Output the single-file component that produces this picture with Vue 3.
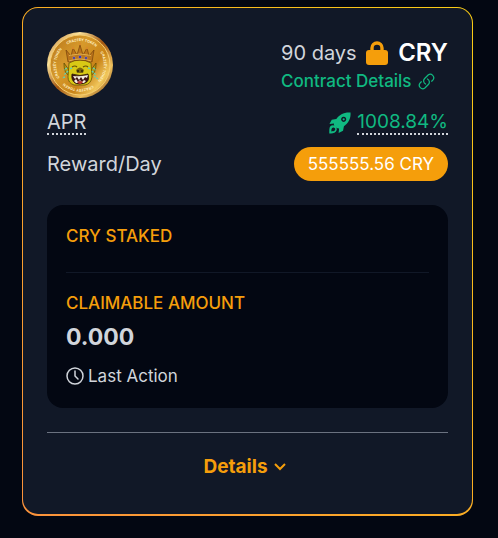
<template>
  <main class="page">
    <section class="pool-card">
      <div class="pool-body">
        <header class="pool-header">
          <svg class="coin" viewBox="0 0 66 66" role="img" aria-label="CRY token">
            <defs>
              <linearGradient id="coinRim" x1="0" y1="0" x2="1" y2="1">
                <stop offset="0" stop-color="#b96b1c" />
                <stop offset="0.25" stop-color="#fbe29b" />
                <stop offset="0.5" stop-color="#a3560f" />
                <stop offset="0.75" stop-color="#edbf5c" />
                <stop offset="1" stop-color="#713407" />
              </linearGradient>
              <linearGradient id="coinFace" x1="0" y1="0.1" x2="1" y2="0.9">
                <stop offset="0" stop-color="#b9781b" />
                <stop offset="0.35" stop-color="#d79a2c" />
                <stop offset="0.65" stop-color="#c98419" />
                <stop offset="0.85" stop-color="#f1c75c" />
                <stop offset="1" stop-color="#b66d13" />
              </linearGradient>
              <path id="coinRing" d="M33 9a24 24 0 1 1-.01 0" />
            </defs>
            <circle cx="33" cy="33" r="33" fill="url(#coinRim)" />
            <circle cx="33" cy="33" r="30" fill="url(#coinFace)" stroke="#f6ce70" />
            <g v-for="angle in ringAngles" :key="angle" :transform="`rotate(${angle} 33 33)`">
              <text class="coin-text">
                <textPath href="#coinRing">CRAZEEY TOKEN</textPath>
              </text>
            </g>
            <!-- ears -->
            <path d="M22 38l-5-7c0 6 1 11 5 12zM44 38l5-7c0 6-1 11-5 12z" fill="#b89911" stroke="#594306" stroke-width="0.7" />
            <!-- head -->
            <path d="M22 31q11-6 22 0l1 14q-1 7-7 8H27q-6-2-6-8z" fill="#d9c915" stroke="#66500a" stroke-width="0.8" />
            <path d="M25 35q3-2 5 0M36 35q3-2 5 0" fill="none" stroke="#68530a" stroke-width="1.2" />
            <path d="M29 38q4-5 8 0l-1 3h-6z" fill="#7b650c" />
            <circle cx="31" cy="39" r="1" fill="#282308" />
            <circle cx="35" cy="39" r="1" fill="#282308" />
            <!-- grin -->
            <path d="M25 42q8 3 16 0 2 7-3 9-6 2-10 0-4-3-3-9z" fill="#401515" stroke="#26120a" stroke-width="0.8" />
            <path d="M26 44l2 3 2-2 2 3 2-3 2 3 2-3 2 1 1-3q-8 2-15 1zM27 49l2-2 2 3 2-2 2 2 2-2 2 1-2 2h-8z" fill="#f5eee0" />
            <path d="M30 50q3-2 6 0l-2 2h-2z" fill="#b93630" />
            <!-- crown -->
            <path d="M21 30l-2-12 5 6 2-8 4 7 3-10 3 10 4-7 2 8 5-6-2 12q-12-4-24 0z" fill="#bc761b" stroke="#76400b" stroke-width="0.7" />
            <path d="M22 23.500q11-3 22 0M22 29q11-4 22 0" fill="none" stroke="#f0c15b" stroke-width="0.8" />
            <circle v-for="x in crownTips" :key="x" :cx="x" :cy="x === 33 ? 12 : 16" r="1.2" fill="#d98b2b" />
            <g fill="#3338bd" stroke="#e3a33b" stroke-width="0.5">
              <circle cx="27" cy="26" r="1.5" />
              <circle cx="33" cy="25" r="1.7" />
              <circle cx="39" cy="26" r="1.5" />
            </g>
            <!-- tears -->
            <path d="M20 36l-3 2M21 39l-4 4M18 45l-3 1M46 36l3 2M45 39l4 4M47 44l4 3M25 36l-2 1M41 36l3 1" stroke="#65cfb0" stroke-width="1.4" stroke-dasharray="2 1" />
          </svg>

          <div class="pool-summary">
            <div class="pool-title">
              <span class="duration">90 days</span>
              <svg class="lock-icon" viewBox="0 0 22 24" aria-hidden="true">
                <path d="M6 11V7a5 5 0 0 1 10 0v4" fill="none" stroke="currentColor" stroke-width="3.4" />
                <rect y="9" width="22" height="15" rx="3" fill="currentColor" />
              </svg>
              <h2 class="symbol">CRY</h2>
            </div>
            <a class="contract-link" href="#contract">
              Contract Details
              <svg class="link-icon" viewBox="1 1 22 22" aria-hidden="true">
                <path d="M13.2 8.7a4.5 4.5 0 0 1 1.2 7.2l-4.5 4.5a4.5 4.5 0 0 1-6.3-6.3l1.7-1.7m13.4-.8 1.7-1.7a4.5 4.5 0 0 0-6.3-6.3L9.6 8.1a4.5 4.5 0 0 0 1.2 7.2" />
              </svg>
            </a>
          </div>
        </header>

        <div class="stat-row">
          <span class="dotted">APR</span>
          <span class="apr-value">
            <svg class="rocket-icon" viewBox="0 0 24 24" aria-hidden="true">
              <path fill-rule="evenodd" d="M23.5.5C16 0 11.5 3 8 7.5L3 8.5.5 13l5-.5c-.7 2 .8 4.8 5.5 5.5l-.5 5 4.8-2.500 1-5C21 12 24 7.500 23.500.500zM16 5.200a2.800 2.800 0 1 0 .01 0z" />
              <circle cx="16" cy="8" r="1.2" />
              <path fill-rule="evenodd" d="M1.5 15.5c1.500-1.500 4-1.500 5.700.3 1.800 1.800 1.700 4.200.1 5.800C5.700 23.200 2.800 23.500.300 23.500c0-2.800-.2-6.500 1.200-8zm1.900 2c-.8.8-.8 2.500-.8 3.700 1.300 0 2.900-.1 3.600-.9.8-.9.8-2 0-2.800s-1.900-.8-2.800 0z" />
            </svg>
            <span class="dotted">1008.84%</span>
          </span>
        </div>
        <div class="stat-row">
          <span>Reward/Day</span>
          <span class="reward-pill">555555.56 CRY</span>
        </div>

        <div class="stake-panel">
          <h3 class="panel-label">CRY STAKED</h3>
          <hr class="panel-divider" />
          <h3 class="panel-label">CLAIMABLE AMOUNT</h3>
          <p class="claimable">0.000</p>
          <p class="last-action">
            <svg class="clock-icon" viewBox="0 0 18 18" aria-hidden="true">
              <circle cx="9" cy="9" r="8" />
              <path d="M9 4v5l3 3" />
            </svg>
            Last Action
          </p>
        </div>

        <footer class="pool-footer">
          <button class="details-button" type="button" :aria-expanded="expanded" @click="expanded = !expanded">
            Details
            <svg class="chevron-icon" :class="{ open: expanded }" viewBox="0 0 12 8" aria-hidden="true">
              <path d="M1 1l5 5 5-5" />
            </svg>
          </button>
        </footer>
      </div>
    </section>
  </main>
</template>

<script setup>
import { ref } from 'vue'

const expanded = ref(false)

// Start angles of the four legends around the coin
const ringAngles = [-32, 58, 148, 238]

const crownTips = [26, 33, 40]
</script>

<style>
body {
  background: #030712;
}
</style>

<style scoped>
.page {
  padding: 7px 25px 22px 22px;
  color: #d1d5db;
  font-family: Inter, 'Liberation Sans', sans-serif;
  font-size: 20px;
  line-height: 24px;
}

/* Gradient frame around the card */
.pool-card {
  padding: 1px 1px 2px;
  border-radius: 16px;
  background: linear-gradient(to top right, #fb923c, #fbad23, #facc15);
}

.pool-body {
  padding: 24px;
  border-radius: 15px;
  background: #111827;
}

.pool-header {
  display: flex;
  align-items: center;
  justify-content: space-between;
  margin-bottom: 13px;
}

.coin {
  width: 66px;
  height: 66px;
}

.coin-text {
  fill: #fff0c2;
  font-size: 3.6px;
  font-weight: 700;
}

.pool-summary {
  width: 167px;
}

.pool-title {
  display: flex;
  align-items: center;
  justify-content: space-between;
  height: 32px;
}

.lock-icon {
  width: 22px;
  height: 24px;
  color: #f59e0b;
}

.symbol {
  margin: 0;
  color: #fff;
  font-size: 24px;
  font-weight: 600;
}

.contract-link {
  display: flex;
  align-items: center;
  gap: 6px;
  color: #10b981;
  font-size: 17px;
  font-weight: 500;
  white-space: nowrap;
  text-decoration: none;
}

.link-icon {
  width: 17px;
  height: 17px;
  fill: none;
  stroke: currentColor;
  stroke-width: 1.6;
  stroke-linecap: round;
}

.stat-row {
  display: flex;
  align-items: center;
  justify-content: space-between;
  margin-bottom: 12px;
}

.dotted {
  line-height: 22px;
  border-bottom: 2px dotted #d1d5db;
}

.apr-value {
  display: flex;
  align-items: center;
  gap: 6px;
  color: #10b981;
  font-size: 19px;
}

.rocket-icon {
  width: 22px;
  height: 22px;
  fill: currentColor;
}

.reward-pill {
  padding: 5px 14px;
  border-radius: 17px;
  background: #f59e0b;
  color: #fff;
  font-size: 17px;
}

.stake-panel {
  margin-top: 24px;
  padding: 19px 19px 20px;
  border-radius: 16px;
  background: #030712;
}

.panel-label {
  margin: 0;
  color: #f59e0b;
  font-size: 17px;
  font-weight: 500;
}

.panel-divider {
  height: 1px;
  margin: 24px 0 18px;
  border: 0;
  background: #111827;
}

.claimable {
  margin: 10px 0 15px;
  font-size: 23px;
  font-weight: 700;
}

.last-action {
  display: flex;
  align-items: center;
  gap: 4px;
  margin: 0;
  font-size: 17px;
}

.clock-icon {
  width: 18px;
  height: 18px;
  fill: none;
  stroke: currentColor;
  stroke-width: 1.5;
  stroke-linecap: round;
}

.pool-footer {
  display: flex;
  justify-content: center;
  margin-top: 24px;
  padding: 22px 0 11px;
  border-top: 1px solid #6b7280;
}

.details-button {
  display: flex;
  align-items: center;
  gap: 6px;
  padding: 0 6px 0 0;
  border: 0;
  background: none;
  color: #f59e0b;
  font: inherit;
  font-size: 19px;
  font-weight: 700;
  cursor: pointer;
}

.chevron-icon {
  width: 12px;
  height: 8px;
  fill: none;
  stroke: currentColor;
  stroke-width: 2;
}

.chevron-icon.open {
  transform: rotate(180deg);
}
</style>
